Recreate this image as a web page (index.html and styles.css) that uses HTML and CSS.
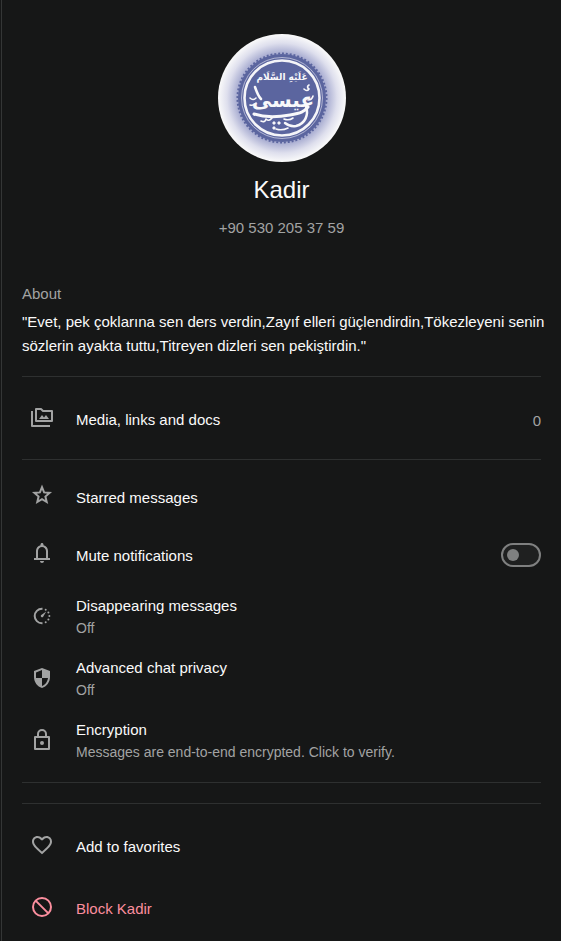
FILE: index.html
```html
<!DOCTYPE html>
<html lang="en">
<head>
    <meta charset="UTF-8">
    <meta name="viewport" content="width=device-width, initial-scale=1.0">
    <title>Contact info</title>
    <link rel="stylesheet" href="styles.css">
</head>
<body>
  <main class="drawer">
    <!-- Profile -->
    <header class="profile">
      <svg class="avatar" viewBox="0 0 128 128" role="img" aria-label="Profile photo">
        <defs>
          <radialGradient id="glow">
            <stop offset="0.6" stop-color="#8b90c0" />
            <stop offset="0.72" stop-color="#aeb2d4" />
            <stop offset="0.86" stop-color="#dedfed" />
            <stop offset="1" stop-color="#fafafa" />
          </radialGradient>
        </defs>
        <circle cx="64" cy="64" r="64" fill="url(#glow)" />
        <!-- Seal -->
        <circle cx="64" cy="64" r="44" fill="#5b659f" />
        <circle cx="64" cy="64" r="44.5" fill="none" stroke="#5b659f" stroke-width="2" pathLength="144" stroke-dasharray="1 1" />
        <circle cx="64" cy="64" r="40.5" fill="none" stroke="#c9cce2" stroke-width="0.8" />
        <circle cx="64" cy="64" r="37.5" fill="none" stroke="#f4f4f8" stroke-width="2.6" />
        <g fill="#f8f8fa" text-anchor="middle" font-family="DejaVu Sans, sans-serif" direction="rtl">
          <text x="64" y="46" font-size="9" font-weight="bold">عَلَيْهِ السَّلَام</text>
          <text x="65" y="73" font-size="20" font-weight="bold">عيسى</text>
        </g>
        <!-- Ornaments -->
        <g fill="none" stroke="#f8f8fa" stroke-linecap="round" stroke-linejoin="round">
          <path d="M36 80c12 4 25 3 36 1s14-3 18-8" stroke-width="3" />
          <path d="M88 72c3 9-1 18-10 20q-6 1-11-3" stroke-width="2.500" />
          <path d="M37 53q3 9 6 12" stroke-width="2.500" />
          <path d="M86 55q3 3 5 0q-3-2 0-4M90 66q4 0 5-4M32 64q3 3 6 0M32 71q4 1 6-2" stroke-width="1.600" />
          <path d="M43 87q4 2 5-2q3 3 6-1M66 85q5 2 9-1M58 95q6 2 12-1" stroke-width="1.600" />
        </g>
        <path d="M54 89l2-2 2 2-2 2zM54 94l2-2 2 2-2 2zM59 89l2-2 2 2-2 2z" fill="#f8f8fa" />
      </svg>
      <h1 class="name">Kadir</h1>
      <p class="phone">+90 530 205 37 59</p>
    </header>

    <!-- About -->
    <section class="about">
      <h2 class="about-title">About</h2>
      <p class="about-text">"Evet, pek çoklarına sen ders verdin,Zayıf elleri güçlendirdin,Tökezleyeni senin sözlerin ayakta tuttu,Titreyen dizleri sen pekiştirdin."</p>
    </section>

    <!-- Media -->
    <section class="group media">
      <button type="button" class="row">
        <svg class="icon" viewBox="0 0 24 24" aria-hidden="true">
          <g fill="none" stroke="currentColor" stroke-width="2" stroke-linejoin="round">
            <path d="M6 4h5l2 2h9v10H6z" />
            <path d="M2 6v15h18" />
          </g>
          <path d="M9 14l3-4 2 2.500 2-2.500 3 4z" fill="currentColor" />
        </svg>
        <span class="label">Media, links and docs</span>
        <span class="count">0</span>
      </button>
    </section>

    <!-- Chat settings -->
    <section class="group settings">
      <button type="button" class="row">
        <svg class="icon" viewBox="0 0 24 24" aria-hidden="true">
          <path d="M12 4.200l2.100 5.200 5.500.5-4.200 3.600 1.300 5.500L12 16.100 7.300 19l1.300-5.500-4.200-3.600 5.500-.5z" fill="none" stroke="currentColor" stroke-width="2" />
        </svg>
        <span class="label">Starred messages</span>
      </button>
      <div class="row">
        <svg class="icon" viewBox="0 0 24 24" aria-hidden="true">
          <path fill="currentColor" d="M4 19v-2h2v-7c0-1.380.42-2.610 1.250-3.690C8.080 5.240 9.170 4.530 10.500 4.200v-.7c0-.83.67-1.500 1.500-1.500s1.500.67 1.500 1.500v.7c1.330.33 2.420 1.040 3.250 2.110C17.580 7.390 18 8.620 18 10v7h2v2H4zm8 3c-1.100 0-2-.9-2-2h4c0 1.100-.9 2-2 2zm-4-5h8v-7c0-2.200-1.800-4-4-4s-4 1.800-4 4v7z" />
        </svg>
        <label class="label" for="mute">Mute notifications</label>
        <input type="checkbox" id="mute" class="switch">
      </div>
      <button type="button" class="row two-line">
        <svg class="icon" viewBox="0 0 24 24" aria-hidden="true">
          <path d="M12.500 4.700H12a7.300 7.300 0 0 0 0 14.600h.5" fill="none" stroke="currentColor" stroke-width="2" />
          <path d="M10.900 11.200L16.200 7.500 13 13.100A1.500 1.500 0 0 1 10.900 11.200z" fill="currentColor" />
          <g fill="currentColor">
            <circle cx="15.700" cy="5.700" r="1" />
            <circle cx="18.400" cy="8.400" r="1" />
            <circle cx="19.400" cy="12" r="1" />
            <circle cx="18.400" cy="15.600" r="1" />
            <circle cx="15.700" cy="18.300" r="1" />
          </g>
        </svg>
        <span class="label">Disappearing messages <small class="hint">Off</small></span>
      </button>
      <button type="button" class="row two-line">
        <svg class="icon" viewBox="0 0 24 24" aria-hidden="true">
          <path fill="currentColor" fill-rule="evenodd" d="M12 2L4 5v6.100c0 5.050 3.410 9.760 8 10.900 4.590-1.140 8-5.850 8-10.900V5l-8-3zm0 2.100V12h6c-.4 3.600-2.800 6.900-6 7.900V12H6V6.400l6-2.300z" />
        </svg>
        <span class="label">Advanced chat privacy <small class="hint">Off</small></span>
      </button>
      <button type="button" class="row two-line">
        <svg class="icon" viewBox="0 0 24 24" aria-hidden="true">
          <g fill="none" stroke="currentColor" stroke-width="2" stroke-linejoin="round">
            <path d="M5 9h14v12H5z" />
            <path d="M8 9V6a4 4 0 0 1 8 0v3" />
          </g>
          <circle cx="12" cy="15" r="2" fill="currentColor" />
        </svg>
        <span class="label">Encryption <small class="hint">Messages are end-to-end encrypted. Click to verify.</small></span>
      </button>
    </section>

    <!-- Actions -->
    <section class="group actions">
      <button type="button" class="row">
        <svg class="icon" viewBox="0 0 24 24" aria-hidden="true">
          <path fill="currentColor" d="M16.500 3c-1.740 0-3.410.81-4.500 2.090C10.910 3.810 9.240 3 7.500 3 4.420 3 2 5.420 2 8.500c0 3.780 3.400 6.860 8.550 11.540L12 21.350l1.450-1.320C18.600 15.360 22 12.280 22 8.500 22 5.420 19.580 3 16.500 3zm-4.400 15.550l-.1.100-.1-.1C7.140 14.240 4 11.390 4 8.500 4 6.500 5.500 5 7.500 5c1.540 0 3.040.99 3.570 2.360h1.870C13.460 5.990 14.960 5 16.500 5c2 0 3.500 1.500 3.500 3.500 0 2.890-3.140 5.740-7.900 10.050z" />
        </svg>
        <span class="label">Add to favorites</span>
      </button>
      <button type="button" class="row danger">
        <svg class="icon" viewBox="0 0 24 24" aria-hidden="true">
          <g fill="none" stroke="currentColor" stroke-width="2">
            <circle cx="12" cy="12" r="9" />
            <path d="M5.600 5.600l12.800 12.800" />
          </g>
        </svg>
        <span class="label">Block Kadir</span>
      </button>
    </section>
  </main>
</body>
</html>
```
FILE: styles.css
```css
/* Global Styles */
* {
    box-sizing: border-box;
}

body {
    margin: 0;
    padding-left: 1px;
    font-family: "Liberation Sans", Arial, sans-serif;
    font-size: 15px;
    background-color: #161717;
    color: #fafafa;
}

h1, h2, p {
    margin: 0;
    font-weight: normal;
}

.drawer {
    min-height: 100vh;
    padding: 34px 20px 0;
    border-left: 1px solid #343636;
}

/* Profile */
.profile {
    display: flex;
    flex-direction: column;
    align-items: center;
}

.avatar {
    width: 128px;
    height: 128px;
}

.name {
    margin-top: 12px;
    font-size: 24px;
    line-height: 32px;
}

.phone {
    margin-top: 12px;
    line-height: 20px;
    color: #a2a3a3;
}

/* About */
.about {
    padding: 46px 0 18px;
}

.about-title {
    font-size: 15px;
    line-height: 20px;
    color: #a2a3a3;
}

.about-text {
    margin: 6px -12px 0 0;
    line-height: 24px;
}

/* Rows */
.group {
    border-top: 1px solid #2e3030;
}

.media {
    padding: 14px 0 10px;
}

.settings {
    padding: 9px 0 11px;
    margin-bottom: 20px;
    border-bottom: 1px solid #2e3030;
}

.actions {
    padding-top: 12px;
}

.row {
    display: flex;
    align-items: center;
    width: 100%;
    height: 58px;
    padding: 0 0 0 8px;
    border: none;
    background: none;
    color: inherit;
    font: inherit;
    text-align: left;
    cursor: pointer;
}

.actions .row,
.two-line {
    height: 62px;
}

.icon {
    flex: none;
    width: 24px;
    height: 24px;
    margin: 0 22px 6px 0;
    color: #a2a3a3;
}

.actions .icon {
    margin-bottom: 4px;
}

.two-line .icon {
    margin-bottom: 0;
}

.label {
    flex: 1;
    line-height: 22px;
}

.two-line .label {
    padding-top: 2px;
}

.hint {
    display: block;
    font-size: 14px;
    color: #a2a3a3;
}

.count {
    color: #a2a3a3;
}

.danger,
.danger .icon {
    color: #fb8e9e;
}

/* Toggle */
.switch {
    appearance: none;
    display: flex;
    align-items: center;
    width: 40px;
    height: 24px;
    margin: 0 0 2px;
    padding-left: 4px;
    border: 2px solid #7f8080;
    border-radius: 12px;
    background-color: #1f2020;
    cursor: pointer;
}

.switch::before {
    content: "";
    width: 12px;
    height: 12px;
    border-radius: 50%;
    background-color: #7f8080;
}

.switch:checked {
    justify-content: flex-end;
    padding: 0 4px 0 0;
}
```
